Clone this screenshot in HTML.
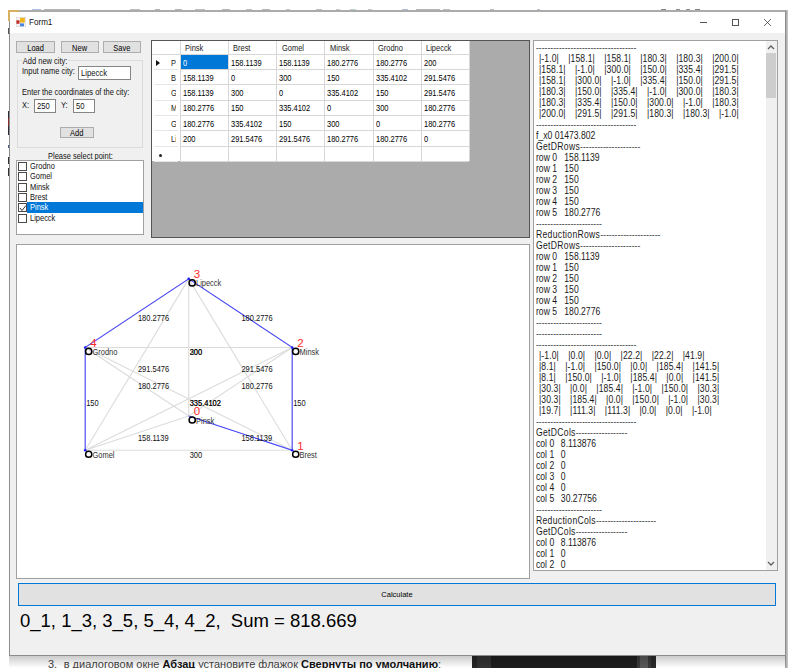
<!DOCTYPE html><html><head><meta charset="utf-8"><style>
*{margin:0;padding:0;box-sizing:border-box}
html,body{width:804px;height:668px;overflow:hidden;background:#fff;font-family:"Liberation Sans",sans-serif;color:#000}
.a{position:absolute;white-space:nowrap}
.btn{position:absolute;background:#e1e1e1;border:1px solid #adadad;font-size:8px;text-align:center;color:#000;white-space:nowrap}
.tb{position:absolute;background:#fff;border:1px solid #858585;font-size:8.6px;white-space:nowrap;color:#111}
.l{position:absolute;font-size:8.6px;white-space:nowrap;color:#111;transform:scaleX(0.87);transform-origin:0 0}
.s{display:inline-block;transform:scaleX(0.87)}
.cb{position:absolute;width:9px;height:9px;border:1px solid #4a4a4a;background:#fff}
.gl{position:absolute;background:#d7d7d7}
.ct{position:absolute;font-size:8.8px;white-space:nowrap;color:#1a1a1a;transform:scaleX(0.85);transform-origin:0 0}
.tx{position:absolute;font-size:10px;white-space:pre;color:#1a1a1a;line-height:11px;transform:scaleX(0.861);transform-origin:0 0}
.dd{color:#555}
.mc{display:inline-block;margin-right:10.77px;letter-spacing:0.114px}
</style></head><body>
<div class="a" style="left:472px;top:656px;width:184px;height:12px;background:#1e1e1e"></div>
<div class="a" style="left:472px;top:656px;width:5px;height:12px;background:#262626"></div>
<div class="a" style="left:477px;top:656px;width:14px;height:12px;background:#333"></div>
<div class="a" style="left:637px;top:656px;width:3px;height:12px;background:#3a3a3a"></div>
<div class="a" style="left:640px;top:656px;width:7.5px;height:12px;background:#5a5a5a"></div>
<div class="a" style="left:647.5px;top:656px;width:3.5px;height:12px;background:#3a3a3a"></div>
<div class="a" style="left:651px;top:656px;width:5px;height:12px;background:#2a2a2a"></div>
<div class="a" style="left:48px;top:658px;font-size:11px;color:#444;white-space:nowrap">3.<span style="display:inline-block;width:6.5px"></span>в диалоговом окне <b style="color:#111">Абзац</b> установите флажок <b style="color:#111">Свернуты по умолчанию</b>:</div>
<div class="a" style="left:8px;top:28px;width:1.5px;height:5.5px;background:#555"></div>
<div class="a" style="left:8px;top:111px;width:1.5px;height:7px;background:#2a2a3a"></div>
<div class="a" style="left:8px;top:118px;width:1.5px;height:8px;background:#8a2a2a"></div>
<div class="a" style="left:8px;top:126px;width:1.5px;height:9px;background:#2a2a3a"></div>
<div class="a" style="left:8px;top:145px;width:1.5px;height:3px;background:#4a5a8a"></div>
<div class="a" style="left:8px;top:157px;width:1.5px;height:7px;background:#333"></div>
<div class="a" style="left:8px;top:168px;width:1.5px;height:8px;background:#333"></div>
<div class="a" style="left:32px;top:9px;width:9px;height:1px;background:#6a8ac8;opacity:0.55"></div>
<div class="a" style="left:44px;top:9px;width:36px;height:1px;background:#777;opacity:0.55"></div>
<div class="a" style="left:130px;top:9px;width:10px;height:1px;background:#888;opacity:0.55"></div>
<div class="a" style="left:155px;top:9px;width:5px;height:1px;background:#777;opacity:0.55"></div>
<div class="a" style="left:175px;top:9px;width:7px;height:1px;background:#777;opacity:0.55"></div>
<div class="a" style="left:195px;top:9px;width:10px;height:1px;background:#888;opacity:0.55"></div>
<div class="a" style="left:222px;top:9px;width:8px;height:1px;background:#777;opacity:0.55"></div>
<div class="a" style="left:246px;top:9px;width:6px;height:1px;background:#888;opacity:0.55"></div>
<div class="a" style="left:262px;top:9px;width:8px;height:1px;background:#777;opacity:0.55"></div>
<div class="a" style="left:286px;top:9px;width:4px;height:1px;background:#999;opacity:0.55"></div>
<div class="a" style="left:316px;top:9px;width:6px;height:1px;background:#888;opacity:0.55"></div>
<div class="a" style="left:336px;top:9px;width:4px;height:1px;background:#999;opacity:0.55"></div>
<div class="a" style="left:350px;top:9px;width:6px;height:1px;background:#8aa;opacity:0.55"></div>
<div class="a" style="left:368px;top:9px;width:4px;height:1px;background:#899;opacity:0.55"></div>
<div class="a" style="left:402px;top:9px;width:6px;height:1px;background:#6a8ac8;opacity:0.55"></div>
<div class="a" style="left:416px;top:9px;width:24px;height:1px;background:#777;opacity:0.55"></div>
<div class="a" style="left:443px;top:9px;width:7px;height:1px;background:#888;opacity:0.55"></div>
<div class="a" style="left:490px;top:9px;width:4px;height:1px;background:#888;opacity:0.55"></div>
<div class="a" style="left:537px;top:9px;width:3px;height:1px;background:#88a;opacity:0.55"></div>
<div class="a" style="left:661px;top:9px;width:5px;height:1px;background:#222;opacity:0.55"></div>
<div class="a" style="left:676px;top:9px;width:4px;height:1px;background:#333;opacity:0.55"></div>
<div class="a" style="left:686px;top:9px;width:4px;height:1px;background:#333;opacity:0.55"></div>
<div class="a" style="left:695px;top:9px;width:5px;height:1px;background:#222;opacity:0.55"></div>
<div class="a" style="left:785px;top:10px;width:3px;height:658px;background:linear-gradient(90deg,#9a9a9a,#c8c8c8)"></div>
<div class="a" style="left:9px;top:655px;width:777px;height:13px;background:linear-gradient(180deg,rgba(0,0,0,0.22),rgba(0,0,0,0))"></div>
<div class="a" style="left:9px;top:10px;width:777px;height:646px;border:1px solid #8c8c8c;border-top:2px solid #ababab;background:#f0f0f0"></div>
<div class="a" style="left:8px;top:10px;width:11px;height:2px;background:#d8b060"></div>
<div class="a" style="left:8px;top:10px;width:2px;height:11px;background:#d8b060"></div>
<div class="a" style="left:10px;top:12px;width:775px;height:21px;background:#fff"></div>
<svg class="a" style="left:16px;top:17px" width="10" height="10" viewBox="0 0 10 10"><rect x="0.25" y="0.25" width="9.5" height="9.5" fill="#f4f4f4" stroke="#cfcfcf" stroke-width="0.5"/><rect x="4" y="0.8" width="4.8" height="4.8" fill="#efb51c"/><rect x="0.4" y="3.3" width="3.1" height="3.5" fill="#c0302a"/><rect x="4" y="6.4" width="4" height="2.9" fill="#4a86e0"/></svg>
<div class="a" style="left:29.3px;top:17px;font-size:9.2px;color:#111;transform:scaleX(0.88);transform-origin:0 0">Form1</div>
<div class="a" style="left:700px;top:22px;width:7px;height:1px;background:#555"></div>
<div class="a" style="left:731.5px;top:19px;width:7px;height:7px;border:1px solid #555"></div>
<svg class="a" style="left:764px;top:19px" width="7" height="7" viewBox="0 0 7 7"><path d="M0 0L7 7M7 0L0 7" stroke="#444" stroke-width="0.8"/></svg>
<div class="btn" style="left:16px;top:41px;width:39px;height:12px;line-height:12px;font-size:8.6px"><span class="s">Load</span></div>
<div class="btn" style="left:61px;top:41px;width:38px;height:12px;line-height:12px;font-size:8.6px"><span class="s">New</span></div>
<div class="btn" style="left:103px;top:41px;width:38px;height:12px;line-height:12px;font-size:8.6px"><span class="s">Save</span></div>
<div class="a" style="left:17px;top:60px;width:126px;height:88px;border:1px solid #dcdcdc"></div>
<div class="l" style="left:22px;top:56px;background:#f0f0f0;padding:0 1px">Add new city:</div>
<div class="l" style="left:22px;top:66.3px">Input name city:</div>
<div class="tb" style="left:78px;top:66px;width:53px;height:14px;padding:0 0 0 2px;font-size:9.6px"><span class="s" style="transform-origin:0 0;transform:scaleX(0.8)">Lipecck</span></div>
<div class="l" style="left:22px;top:86.8px">Enter the coordinates of the city:</div>
<div class="l" style="left:22px;top:100px">X:</div>
<div class="tb" style="left:34px;top:99px;width:22px;height:14px;padding:0 0 0 2px;font-size:9.6px"><span class="s" style="transform-origin:0 0;transform:scaleX(0.8)">250</span></div>
<div class="l" style="left:61px;top:100px">Y:</div>
<div class="tb" style="left:73px;top:99px;width:22px;height:14px;padding:0 0 0 2px;font-size:9.6px"><span class="s" style="transform-origin:0 0;transform:scaleX(0.8)">50</span></div>
<div class="btn" style="left:60px;top:127px;width:34px;height:11px;line-height:11px;font-size:8.6px"><span class="s">Add</span></div>
<div class="l" style="left:48px;top:151px">Please select point:</div>
<div class="a" style="left:16px;top:160px;width:128px;height:75px;border:1px solid #a0a0a0;background:#fff"></div>
<div class="cb" style="left:18px;top:162.0px"></div>
<div class="l" style="left:30px;top:161.0px">Grodno</div>
<div class="cb" style="left:18px;top:172.3px"></div>
<div class="l" style="left:30px;top:171.3px">Gomel</div>
<div class="cb" style="left:18px;top:182.6px"></div>
<div class="l" style="left:30px;top:181.6px">Minsk</div>
<div class="cb" style="left:18px;top:192.9px"></div>
<div class="l" style="left:30px;top:191.9px">Brest</div>
<div class="cb" style="left:18px;top:203.2px"></div>
<div class="a" style="left:27px;top:202.3px;width:116px;height:10.4px;background:#0078d7"></div>
<svg class="a" style="left:19px;top:203.7px" width="8" height="8" viewBox="0 0 8 8"><path d="M1 4L3 6.5L7 1.5" fill="none" stroke="#333" stroke-width="1"/></svg>
<div class="l" style="left:30px;top:202.2px;color:#fff">Pinsk</div>
<div class="cb" style="left:18px;top:213.5px"></div>
<div class="l" style="left:30px;top:212.5px">Lipecck</div>
<div class="a" style="left:151px;top:40px;width:379px;height:198px;background:#ababab;border:1px solid #555;border-left:1.5px solid #555"></div>
<div class="a" style="left:152px;top:41px;width:317.4px;height:120.30000000000001px;background:#fff"></div>
<div class="gl" style="left:179.5px;top:41px;width:1px;height:120.3px"></div>
<div class="gl" style="left:227.9px;top:41px;width:1px;height:120.3px"></div>
<div class="gl" style="left:276.1px;top:41px;width:1px;height:120.3px"></div>
<div class="gl" style="left:324.3px;top:41px;width:1px;height:120.3px"></div>
<div class="gl" style="left:372.5px;top:41px;width:1px;height:120.3px"></div>
<div class="gl" style="left:420.7px;top:41px;width:1px;height:120.3px"></div>
<div class="gl" style="left:468.9px;top:41px;width:1px;height:120.3px"></div>
<div class="gl" style="left:152px;top:53.7px;width:317.4px;height:1px"></div>
<div class="gl" style="left:180px;top:69.0px;width:289.4px;height:1px"></div>
<div class="a" style="left:154px;top:69.0px;width:24px;height:1px;background:#e6e6e6"></div>
<div class="gl" style="left:180px;top:84.3px;width:289.4px;height:1px"></div>
<div class="a" style="left:154px;top:84.3px;width:24px;height:1px;background:#e6e6e6"></div>
<div class="gl" style="left:180px;top:99.6px;width:289.4px;height:1px"></div>
<div class="a" style="left:154px;top:99.6px;width:24px;height:1px;background:#e6e6e6"></div>
<div class="gl" style="left:180px;top:114.9px;width:289.4px;height:1px"></div>
<div class="a" style="left:154px;top:114.9px;width:24px;height:1px;background:#e6e6e6"></div>
<div class="gl" style="left:180px;top:130.2px;width:289.4px;height:1px"></div>
<div class="a" style="left:154px;top:130.2px;width:24px;height:1px;background:#e6e6e6"></div>
<div class="gl" style="left:180px;top:145.5px;width:289.4px;height:1px"></div>
<div class="a" style="left:154px;top:145.5px;width:24px;height:1px;background:#e6e6e6"></div>
<div class="gl" style="left:180px;top:160.8px;width:289.4px;height:1px"></div>
<div class="a" style="left:154px;top:160.8px;width:24px;height:1px;background:#e6e6e6"></div>
<div class="a" style="left:180.5px;top:54.7px;width:47.5px;height:14.8px;background:#0078d7"></div>
<div class="ct" style="left:185.0px;top:43.4px">Pinsk</div>
<div class="ct" style="left:233.4px;top:43.4px">Brest</div>
<div class="ct" style="left:281.6px;top:43.4px">Gomel</div>
<div class="ct" style="left:329.8px;top:43.4px">Minsk</div>
<div class="ct" style="left:378.0px;top:43.4px">Grodno</div>
<div class="ct" style="left:426.2px;top:43.4px">Lipecck</div>
<div class="a" style="left:170.5px;top:55.5px;width:5.2px;height:12px;overflow:hidden"><div class="ct" style="left:0.5px;top:2px">Pinsk</div></div>
<div class="ct" style="left:182.5px;top:57.5px;color:#fff">0</div>
<div class="ct" style="left:230.9px;top:57.5px;color:#000">158.1139</div>
<div class="ct" style="left:279.1px;top:57.5px;color:#000">158.1139</div>
<div class="ct" style="left:327.3px;top:57.5px;color:#000">180.2776</div>
<div class="ct" style="left:375.5px;top:57.5px;color:#000">180.2776</div>
<div class="ct" style="left:423.7px;top:57.5px;color:#000">200</div>
<div class="a" style="left:170.5px;top:70.8px;width:5.2px;height:12px;overflow:hidden"><div class="ct" style="left:0.5px;top:2px">Brest</div></div>
<div class="ct" style="left:182.5px;top:72.8px;color:#000">158.1139</div>
<div class="ct" style="left:230.9px;top:72.8px;color:#000">0</div>
<div class="ct" style="left:279.1px;top:72.8px;color:#000">300</div>
<div class="ct" style="left:327.3px;top:72.8px;color:#000">150</div>
<div class="ct" style="left:375.5px;top:72.8px;color:#000">335.4102</div>
<div class="ct" style="left:423.7px;top:72.8px;color:#000">291.5476</div>
<div class="a" style="left:170.5px;top:86.1px;width:5.2px;height:12px;overflow:hidden"><div class="ct" style="left:0.5px;top:2px">Gomel</div></div>
<div class="ct" style="left:182.5px;top:88.1px;color:#000">158.1139</div>
<div class="ct" style="left:230.9px;top:88.1px;color:#000">300</div>
<div class="ct" style="left:279.1px;top:88.1px;color:#000">0</div>
<div class="ct" style="left:327.3px;top:88.1px;color:#000">335.4102</div>
<div class="ct" style="left:375.5px;top:88.1px;color:#000">150</div>
<div class="ct" style="left:423.7px;top:88.1px;color:#000">291.5476</div>
<div class="a" style="left:170.5px;top:101.4px;width:5.2px;height:12px;overflow:hidden"><div class="ct" style="left:0.5px;top:2px">Minsk</div></div>
<div class="ct" style="left:182.5px;top:103.4px;color:#000">180.2776</div>
<div class="ct" style="left:230.9px;top:103.4px;color:#000">150</div>
<div class="ct" style="left:279.1px;top:103.4px;color:#000">335.4102</div>
<div class="ct" style="left:327.3px;top:103.4px;color:#000">0</div>
<div class="ct" style="left:375.5px;top:103.4px;color:#000">300</div>
<div class="ct" style="left:423.7px;top:103.4px;color:#000">180.2776</div>
<div class="a" style="left:170.5px;top:116.7px;width:5.2px;height:12px;overflow:hidden"><div class="ct" style="left:0.5px;top:2px">Grodno</div></div>
<div class="ct" style="left:182.5px;top:118.7px;color:#000">180.2776</div>
<div class="ct" style="left:230.9px;top:118.7px;color:#000">335.4102</div>
<div class="ct" style="left:279.1px;top:118.7px;color:#000">150</div>
<div class="ct" style="left:327.3px;top:118.7px;color:#000">300</div>
<div class="ct" style="left:375.5px;top:118.7px;color:#000">0</div>
<div class="ct" style="left:423.7px;top:118.7px;color:#000">180.2776</div>
<div class="a" style="left:170.5px;top:132.0px;width:5.2px;height:12px;overflow:hidden"><div class="ct" style="left:0.5px;top:2px">Lipecck</div></div>
<div class="ct" style="left:182.5px;top:134.0px;color:#000">200</div>
<div class="ct" style="left:230.9px;top:134.0px;color:#000">291.5476</div>
<div class="ct" style="left:279.1px;top:134.0px;color:#000">291.5476</div>
<div class="ct" style="left:327.3px;top:134.0px;color:#000">180.2776</div>
<div class="ct" style="left:375.5px;top:134.0px;color:#000">180.2776</div>
<div class="ct" style="left:423.7px;top:134.0px;color:#000">0</div>
<svg class="a" style="left:156px;top:60px" width="4" height="6" viewBox="0 0 4 6"><path d="M0 0L4 3L0 6Z" fill="#111"/></svg>
<div class="a" style="left:158.5px;top:153.5px;width:3px;height:3px;border-radius:50%;background:#222"></div>
<div class="a" style="left:16px;top:244px;width:514px;height:335px;background:#fff;border:1px solid #a0a0a0"></div>
<div class="a" style="left:533px;top:40px;width:245px;height:531px;background:#fff;border:1px solid #a0a0a0;overflow:hidden"></div>
<div class="a" style="left:765.5px;top:41px;width:11.5px;height:529px;background:#f0f0f0"></div>
<div class="a" style="left:766px;top:53px;width:10px;height:45px;background:#cdcdcd"></div>
<svg class="a" style="left:767px;top:45px" width="8" height="5" viewBox="0 0 8 5"><path d="M1 4L4 1L7 4" fill="none" stroke="#606060" stroke-width="1.3"/></svg>
<svg class="a" style="left:767px;top:561px" width="8" height="5" viewBox="0 0 8 5"><path d="M1 1L4 4L7 1" fill="none" stroke="#606060" stroke-width="1.3"/></svg>
<svg class="a" style="left:0;top:0" width="804" height="668" viewBox="0 0 804 668">
<line x1="188.70" y1="415.98" x2="292.20" y2="450.25" stroke="#dcdcdc" stroke-width="1.1"/>
<line x1="188.70" y1="415.98" x2="85.20" y2="450.25" stroke="#dcdcdc" stroke-width="1.1"/>
<line x1="188.70" y1="415.98" x2="292.20" y2="347.43" stroke="#dcdcdc" stroke-width="1.1"/>
<line x1="188.70" y1="415.98" x2="85.20" y2="347.43" stroke="#dcdcdc" stroke-width="1.1"/>
<line x1="188.70" y1="415.98" x2="188.70" y2="278.88" stroke="#dcdcdc" stroke-width="1.1"/>
<line x1="292.20" y1="450.25" x2="85.20" y2="450.25" stroke="#dcdcdc" stroke-width="1.1"/>
<line x1="292.20" y1="450.25" x2="292.20" y2="347.43" stroke="#dcdcdc" stroke-width="1.1"/>
<line x1="292.20" y1="450.25" x2="85.20" y2="347.43" stroke="#dcdcdc" stroke-width="1.1"/>
<line x1="292.20" y1="450.25" x2="188.70" y2="278.88" stroke="#dcdcdc" stroke-width="1.1"/>
<line x1="85.20" y1="450.25" x2="292.20" y2="347.43" stroke="#dcdcdc" stroke-width="1.1"/>
<line x1="85.20" y1="450.25" x2="85.20" y2="347.43" stroke="#dcdcdc" stroke-width="1.1"/>
<line x1="85.20" y1="450.25" x2="188.70" y2="278.88" stroke="#dcdcdc" stroke-width="1.1"/>
<line x1="292.20" y1="347.43" x2="85.20" y2="347.43" stroke="#dcdcdc" stroke-width="1.1"/>
<line x1="292.20" y1="347.43" x2="188.70" y2="278.88" stroke="#dcdcdc" stroke-width="1.1"/>
<line x1="85.20" y1="347.43" x2="188.70" y2="278.88" stroke="#dcdcdc" stroke-width="1.1"/>
<line x1="188.70" y1="415.98" x2="292.20" y2="450.25" stroke="#4040ff" stroke-width="1.05"/>
<circle cx="292.20" cy="450.25" r="1.3" fill="#1a1aff"/>
<line x1="292.20" y1="450.25" x2="292.20" y2="347.43" stroke="#4040ff" stroke-width="1.05"/>
<circle cx="292.20" cy="347.43" r="1.3" fill="#1a1aff"/>
<line x1="292.20" y1="347.43" x2="188.70" y2="278.88" stroke="#4040ff" stroke-width="1.05"/>
<circle cx="188.70" cy="278.88" r="1.3" fill="#1a1aff"/>
<line x1="188.70" y1="278.88" x2="85.20" y2="347.43" stroke="#4040ff" stroke-width="1.05"/>
<circle cx="85.20" cy="347.43" r="1.3" fill="#1a1aff"/>
<line x1="85.20" y1="347.43" x2="85.20" y2="450.25" stroke="#4040ff" stroke-width="1.05"/>
<circle cx="85.20" cy="450.25" r="1.3" fill="#1a1aff"/>
<text transform="translate(241.45,440.61) scale(0.87,1)" font-size="8.6" fill="#111">158.1139</text>
<text transform="translate(137.95,440.61) scale(0.87,1)" font-size="8.6" fill="#111">158.1139</text>
<text transform="translate(241.45,389.20) scale(0.87,1)" font-size="8.6" fill="#111">180.2776</text>
<text transform="translate(137.95,389.20) scale(0.87,1)" font-size="8.6" fill="#111">180.2776</text>
<text transform="translate(189.70,354.93) scale(0.87,1)" font-size="8.6" fill="#111">200</text>
<text transform="translate(189.70,457.75) scale(0.87,1)" font-size="8.6" fill="#111">300</text>
<text transform="translate(293.20,406.34) scale(0.87,1)" font-size="8.6" fill="#111">150</text>
<text transform="translate(189.70,406.34) scale(0.87,1)" font-size="8.6" fill="#111">335.4102</text>
<text transform="translate(241.45,372.06) scale(0.87,1)" font-size="8.6" fill="#111">291.5476</text>
<text transform="translate(189.70,406.34) scale(0.87,1)" font-size="8.6" fill="#111">335.4102</text>
<text transform="translate(86.20,406.34) scale(0.87,1)" font-size="8.6" fill="#111">150</text>
<text transform="translate(137.95,372.06) scale(0.87,1)" font-size="8.6" fill="#111">291.5476</text>
<text transform="translate(189.70,354.93) scale(0.87,1)" font-size="8.6" fill="#111">300</text>
<text transform="translate(241.45,320.65) scale(0.87,1)" font-size="8.6" fill="#111">180.2776</text>
<text transform="translate(137.95,320.65) scale(0.87,1)" font-size="8.6" fill="#111">180.2776</text>
<circle cx="192.20" cy="419.98" r="3.1" fill="none" stroke="#000" stroke-width="1.5"/>
<text transform="translate(196.00,423.58) scale(0.87,1)" font-size="8.6" fill="#333">Pinsk</text>
<circle cx="295.70" cy="454.25" r="3.1" fill="none" stroke="#000" stroke-width="1.5"/>
<text transform="translate(299.50,457.85) scale(0.87,1)" font-size="8.6" fill="#333">Brest</text>
<circle cx="88.70" cy="454.25" r="3.1" fill="none" stroke="#000" stroke-width="1.5"/>
<text transform="translate(92.50,457.85) scale(0.87,1)" font-size="8.6" fill="#333">Gomel</text>
<circle cx="295.70" cy="351.43" r="3.1" fill="none" stroke="#000" stroke-width="1.5"/>
<text transform="translate(299.50,355.03) scale(0.87,1)" font-size="8.6" fill="#333">Minsk</text>
<circle cx="88.70" cy="351.43" r="3.1" fill="none" stroke="#000" stroke-width="1.5"/>
<text transform="translate(92.50,355.03) scale(0.87,1)" font-size="8.6" fill="#333">Grodno</text>
<circle cx="192.20" cy="282.88" r="3.1" fill="none" stroke="#000" stroke-width="1.5"/>
<text transform="translate(196.00,286.48) scale(0.87,1)" font-size="8.6" fill="#333">Lipecck</text>
<text x="193.70" y="415.48" font-size="11.5" fill="#ff2a2a">0</text>
<text x="297.20" y="449.75" font-size="11.5" fill="#ff2a2a">1</text>
<text x="297.20" y="346.93" font-size="11.5" fill="#ff2a2a">2</text>
<text x="193.70" y="278.38" font-size="11.5" fill="#ff2a2a">3</text>
<text x="90.20" y="346.93" font-size="11.5" fill="#ff2a2a">4</text>
</svg>
<div class="a" style="left:534px;top:41px;width:231px;height:529px;overflow:hidden">
<div class="tx" style="left:1.7px;top:0.5px"><span class="dd">-----------------------------------</span></div>
<div class="tx" style="left:5.2px;top:11.5px"><span class="mc">|-1.0|</span><span class="mc">|158.1|</span><span class="mc">|158.1|</span><span class="mc">|180.3|</span><span class="mc">|180.3|</span><span class="mc">|200.0|</span></div>
<div class="tx" style="left:5.2px;top:22.5px"><span class="mc">|158.1|</span><span class="mc">|-1.0|</span><span class="mc">|300.0|</span><span class="mc">|150.0|</span><span class="mc">|335.4|</span><span class="mc">|291.5|</span></div>
<div class="tx" style="left:5.2px;top:33.5px"><span class="mc">|158.1|</span><span class="mc">|300.0|</span><span class="mc">|-1.0|</span><span class="mc">|335.4|</span><span class="mc">|150.0|</span><span class="mc">|291.5|</span></div>
<div class="tx" style="left:5.2px;top:44.5px"><span class="mc">|180.3|</span><span class="mc">|150.0|</span><span class="mc">|335.4|</span><span class="mc">|-1.0|</span><span class="mc">|300.0|</span><span class="mc">|180.3|</span></div>
<div class="tx" style="left:5.2px;top:55.5px"><span class="mc">|180.3|</span><span class="mc">|335.4|</span><span class="mc">|150.0|</span><span class="mc">|300.0|</span><span class="mc">|-1.0|</span><span class="mc">|180.3|</span></div>
<div class="tx" style="left:5.2px;top:66.5px"><span class="mc">|200.0|</span><span class="mc">|291.5|</span><span class="mc">|291.5|</span><span class="mc">|180.3|</span><span class="mc">|180.3|</span><span class="mc">|-1.0|</span></div>
<div class="tx" style="left:1.7px;top:77.5px"><span class="dd">-----------------------------------</span></div>
<div class="tx" style="left:1.7px;top:88.5px">f_x0 01473.802</div>
<div class="tx" style="left:1.7px;top:99.5px"><span style="letter-spacing:0.35px">GetDRows</span><span class="dd">---------------------</span></div>
<div class="tx" style="left:1.7px;top:110.5px">row 0<span style="position:absolute;left:32.9px">158.1139</span></div>
<div class="tx" style="left:1.7px;top:121.5px">row 1<span style="position:absolute;left:32.9px">150</span></div>
<div class="tx" style="left:1.7px;top:132.5px">row 2<span style="position:absolute;left:32.9px">150</span></div>
<div class="tx" style="left:1.7px;top:143.5px">row 3<span style="position:absolute;left:32.9px">150</span></div>
<div class="tx" style="left:1.7px;top:154.5px">row 4<span style="position:absolute;left:32.9px">150</span></div>
<div class="tx" style="left:1.7px;top:165.5px">row 5<span style="position:absolute;left:32.9px">180.2776</span></div>
<div class="tx" style="left:1.7px;top:176.5px"><span class="dd">-----------------------</span></div>
<div class="tx" style="left:1.7px;top:187.5px"><span style="letter-spacing:0.35px">ReductionRows</span><span class="dd">---------------------</span></div>
<div class="tx" style="left:1.7px;top:198.5px"><span style="letter-spacing:0.35px">GetDRows</span><span class="dd">---------------------</span></div>
<div class="tx" style="left:1.7px;top:209.5px">row 0<span style="position:absolute;left:32.9px">158.1139</span></div>
<div class="tx" style="left:1.7px;top:220.5px">row 1<span style="position:absolute;left:32.9px">150</span></div>
<div class="tx" style="left:1.7px;top:231.5px">row 2<span style="position:absolute;left:32.9px">150</span></div>
<div class="tx" style="left:1.7px;top:242.5px">row 3<span style="position:absolute;left:32.9px">150</span></div>
<div class="tx" style="left:1.7px;top:253.5px">row 4<span style="position:absolute;left:32.9px">150</span></div>
<div class="tx" style="left:1.7px;top:264.5px">row 5<span style="position:absolute;left:32.9px">180.2776</span></div>
<div class="tx" style="left:1.7px;top:275.5px"><span class="dd">-----------------------</span></div>
<div class="tx" style="left:1.7px;top:286.5px"><span class="dd">-----------------------</span></div>
<div class="tx" style="left:1.7px;top:297.5px"><span class="dd">-----------------------------------</span></div>
<div class="tx" style="left:5.2px;top:308.5px"><span class="mc">|-1.0|</span><span class="mc">|0.0|</span><span class="mc">|0.0|</span><span class="mc">|22.2|</span><span class="mc">|22.2|</span><span class="mc">|41.9|</span></div>
<div class="tx" style="left:5.2px;top:319.5px"><span class="mc">|8.1|</span><span class="mc">|-1.0|</span><span class="mc">|150.0|</span><span class="mc">|0.0|</span><span class="mc">|185.4|</span><span class="mc">|141.5|</span></div>
<div class="tx" style="left:5.2px;top:330.5px"><span class="mc">|8.1|</span><span class="mc">|150.0|</span><span class="mc">|-1.0|</span><span class="mc">|185.4|</span><span class="mc">|0.0|</span><span class="mc">|141.5|</span></div>
<div class="tx" style="left:5.2px;top:341.5px"><span class="mc">|30.3|</span><span class="mc">|0.0|</span><span class="mc">|185.4|</span><span class="mc">|-1.0|</span><span class="mc">|150.0|</span><span class="mc">|30.3|</span></div>
<div class="tx" style="left:5.2px;top:352.5px"><span class="mc">|30.3|</span><span class="mc">|185.4|</span><span class="mc">|0.0|</span><span class="mc">|150.0|</span><span class="mc">|-1.0|</span><span class="mc">|30.3|</span></div>
<div class="tx" style="left:5.2px;top:363.5px"><span class="mc">|19.7|</span><span class="mc">|111.3|</span><span class="mc">|111.3|</span><span class="mc">|0.0|</span><span class="mc">|0.0|</span><span class="mc">|-1.0|</span></div>
<div class="tx" style="left:1.7px;top:374.5px"><span class="dd">-----------------------------------</span></div>
<div class="tx" style="left:1.7px;top:385.5px"><span style="letter-spacing:0.35px">GetDCols</span><span class="dd">------------------</span></div>
<div class="tx" style="left:1.7px;top:396.5px">col 0<span style="position:absolute;left:28.9px">8.113876</span></div>
<div class="tx" style="left:1.7px;top:407.5px">col 1<span style="position:absolute;left:28.9px">0</span></div>
<div class="tx" style="left:1.7px;top:418.5px">col 2<span style="position:absolute;left:28.9px">0</span></div>
<div class="tx" style="left:1.7px;top:429.5px">col 3<span style="position:absolute;left:28.9px">0</span></div>
<div class="tx" style="left:1.7px;top:440.5px">col 4<span style="position:absolute;left:28.9px">0</span></div>
<div class="tx" style="left:1.7px;top:451.5px">col 5<span style="position:absolute;left:28.9px">30.27756</span></div>
<div class="tx" style="left:1.7px;top:462.5px"><span class="dd">-----------------------</span></div>
<div class="tx" style="left:1.7px;top:473.5px"><span style="letter-spacing:0.35px">ReductionCols</span><span class="dd">---------------------</span></div>
<div class="tx" style="left:1.7px;top:484.5px"><span style="letter-spacing:0.35px">GetDCols</span><span class="dd">------------------</span></div>
<div class="tx" style="left:1.7px;top:495.5px">col 0<span style="position:absolute;left:28.9px">8.113876</span></div>
<div class="tx" style="left:1.7px;top:506.5px">col 1<span style="position:absolute;left:28.9px">0</span></div>
<div class="tx" style="left:1.7px;top:517.5px">col 2<span style="position:absolute;left:28.9px">0</span></div>
</div>
<div class="a" style="left:18px;top:583px;width:758px;height:23px;background:#e1e1e1;border:1px solid #0078d7;font-size:7.5px;text-align:center;line-height:21px">Calculate</div>
<div class="a" style="left:20px;top:610px;font-size:18.5px;color:#000">0_1, 1_3, 3_5, 5_4, 4_2,&nbsp; Sum = 818.669</div>
</body></html>
